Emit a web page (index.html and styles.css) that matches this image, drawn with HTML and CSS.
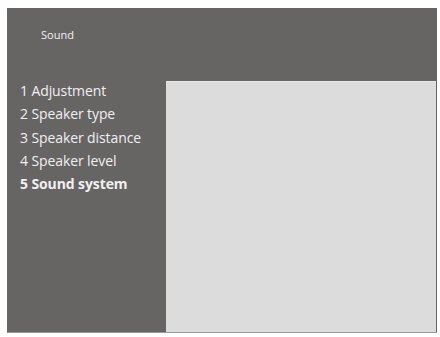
FILE: index.html
```html
<!DOCTYPE html>
<html>
<head>
<meta charset="utf-8">
<link rel="stylesheet" href="styles.css">
</head>
<body>
<div class="screen">
  <div class="header"><span class="title">Sound</span></div>
  <div class="main">
    <ul class="menu">
      <li>1 Adjustment</li>
      <li>2 Speaker type</li>
      <li>3 Speaker distance</li>
      <li>4 Speaker level</li>
      <li class="active">5 Sound system</li>
    </ul>
    <div class="content"></div>
  </div>
</div>
</body>
</html>
```
FILE: styles.css
```css
html, body { margin: 0; padding: 0; background: #fff; }
body { font-family: "Open Sans", "DejaVu Sans", sans-serif; }
.screen {
  margin: 8px 0 0 7px;
  width: 430px;
  height: 325px;
  background: #676464;
  display: flex;
  flex-direction: column;
  border-bottom: 1px solid #9a9a9a;
  box-sizing: border-box;
}
.header {
  height: 73px;
  padding: 17px 0 0 34px;
  box-sizing: border-box;
  line-height: 16px;
}
.title { color: #f2f2f2; font-size: 11px; }
.main { flex: 1; display: flex; }
.menu {
  list-style: none;
  margin: 0;
  padding: 0 0 0 13px;
  width: 159px;
  box-sizing: border-box;
  color: #f0f0f0;
  font-size: 14px;
  letter-spacing: -0.1px;
}
.menu li { height: 23.3px; line-height: 19px; }
.menu li.active { font-weight: bold; }
.content {
  flex: 1;
  background: #dcdcdc;
  border-top: 1px solid #e8e8e8;
  margin-right: 1px;
}
```
